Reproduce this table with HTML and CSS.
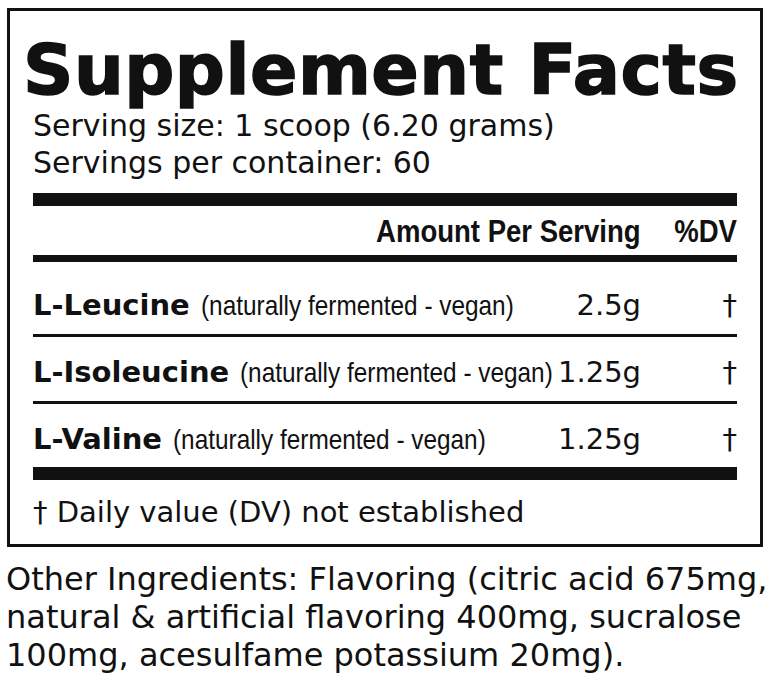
FILE: index.html
```html
<!DOCTYPE html>
<html>
<head>
  <meta charset="UTF-8">
  <title>Supplement Facts</title>
  <link rel="stylesheet" href="styles.css">
</head>
<body>
  <div class="facts">
    <h1 class="facts-title">Supplement Facts</h1>
    <div class="serving">Serving size: 1 scoop (6.20 grams)</div>
    <div class="serving">Servings per container: 60</div>

    <div class="rule rule-thick"></div>

    <div class="facts-head">
      <span class="head-label">Amount Per Serving</span>
      <span class="col-dv"><span class="head-label">%DV</span></span>
    </div>

    <div class="rule rule-medium"></div>

    <div class="facts-rows">
      <div class="facts-row">
        <div class="name">L-Leucine <span class="note">(naturally fermented - vegan)</span></div>
        <div class="amount">2.5g</div>
        <div class="col-dv">&dagger;</div>
      </div>
      <div class="facts-row">
        <div class="name">L-Isoleucine <span class="note">(naturally fermented - vegan)</span></div>
        <div class="amount">1.25g</div>
        <div class="col-dv">&dagger;</div>
      </div>
      <div class="facts-row">
        <div class="name">L-Valine <span class="note">(naturally fermented - vegan)</span></div>
        <div class="amount">1.25g</div>
        <div class="col-dv">&dagger;</div>
      </div>
    </div>

    <div class="rule rule-thick"></div>

    <div class="footnote">&dagger; Daily value (DV) not established</div>
  </div>

  <p class="other">Other Ingredients: Flavoring (citric acid 675mg, natural &amp; artificial flavoring 400mg, sucralose 100mg, acesulfame potassium 20mg).</p>
</body>
</html>
```

FILE: styles.css
```css
body {
  margin: 0;
  background-color: #fff;
  color: #111;
  font-family: "DejaVu Sans", "Liberation Sans", sans-serif;
}

/* Label box */
.facts {
  box-sizing: border-box;
  width: 756px;
  margin: 8px 0 0 7px;
  padding: 24px 23px 17px;
  border: 3px solid #111;
}

.facts-title {
  margin: 0 0 2px -10px;
  font-size: 70px;
  line-height: 70px;
  font-weight: bold;
  letter-spacing: 0.5px;
  -webkit-text-stroke: 1.5px #111;
  white-space: nowrap;
}

.serving {
  font-size: 30px;
  line-height: 37px;
}

/* Rules */
.rule {
  background-color: #111;
}

.rule-thick {
  height: 13px;
  margin-top: 12px;
}

.rule-medium {
  height: 7px;
}

/* Column heading */
.facts-head {
  display: flex;
  justify-content: flex-end;
  padding: 10px 0 9px;
  font-family: "Liberation Sans", Arial, sans-serif;
  font-weight: bold;
  font-size: 32px;
  line-height: 30px;
}

.head-label {
  display: inline-block;
  transform: scaleX(0.86);
  transform-origin: right center;
  white-space: nowrap;
}

.col-dv {
  width: 96px;
  text-align: right;
  flex-shrink: 0;
}

/* Ingredient rows */
.facts-rows {
  padding-top: 8px;
}

.facts-row {
  display: flex;
  align-items: baseline;
  padding: 20px 0 13px;
  font-size: 29px;
  line-height: 30px;
}

.facts-row + .facts-row {
  border-top: 3px solid #111;
}

.facts-rows + .rule-thick {
  margin-top: -1px;
}

.name {
  flex: 1;
  min-width: 0;
  font-weight: bold;
  white-space: nowrap;
}

.note {
  display: inline-block;
  margin-left: 1px;
  font-family: "Liberation Sans", Arial, sans-serif;
  font-weight: normal;
  font-size: 28px;
  transform: scaleX(0.87);
  transform-origin: left center;
}

.amount {
  text-align: right;
  flex-shrink: 0;
}

/* Footnote */
.footnote {
  padding-top: 17px;
  font-size: 29px;
  line-height: 30px;
}

/* Other ingredients */
.other {
  margin: 13px 0 0;
  padding-left: 6px;
  font-size: 32px;
  line-height: 38px;
}
```
